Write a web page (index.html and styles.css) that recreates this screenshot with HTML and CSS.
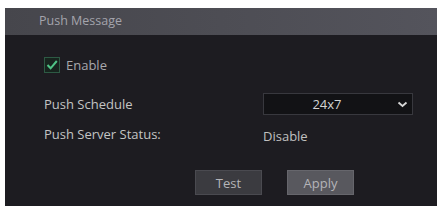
FILE: index.html
```
<html>
<head>
	<title>Push Message</title>
	<link rel="stylesheet" href="styles.css">
</head>
<body>
	<div class="panel">
		<div class="title">Push Message</div>
		<div class="content">
			<label class="check">
				<span class="box">
					<svg width="14" height="14" viewBox="0 0 14 14"><path d="M2.5 7 L5.6 10.3 L11.8 3" fill="none" stroke="#4fc486" stroke-width="2"/></svg>
				</span>
				Enable
			</label>
			<div class="row schedule">
				<span class="label">Push Schedule</span>
				<div class="select">
					<span>24x7</span>
					<svg class="chev" width="11" height="7" viewBox="0 0 11 7"><path d="M1.5 1.5 L5.5 5 L9.5 1.5" fill="none" stroke="#d8d8d8" stroke-width="1.8"/></svg>
				</div>
			</div>
			<div class="row status">
				<span class="label">Push Server Status:</span>
				<span class="value">Disable</span>
			</div>
			<div class="buttons">
				<button class="btn test">Test</button>
				<button class="btn apply">Apply</button>
			</div>
		</div>
	</div>
</body>
</html>
```

FILE: styles.css
```
* {
	box-sizing: border-box;
}

body {
	margin: 0;
	background: #ffffff;
	font-family: "Open Sans", "Liberation Sans", sans-serif;
	font-size: 13px;
	color: #c4c4c4;
}

.panel {
	margin: 8px 0 0 5px;
	height: 200px;
	background: #1d1c21;
}

.title {
	height: 27px;
	padding: 4px 0 0 34px;
	background: linear-gradient(to right, #46464c, #54545c);
	color: #a4a4ac;
	font-size: 12.5px;
}

.content {
	padding: 22px 0 0 39px;
}

.check {
	display: flex;
	align-items: center;
	gap: 6px;
	height: 16px;
	color: #a8a8ac;
}

.box {
	width: 16px;
	height: 16px;
	border: 1px solid #2d5a44;
	background: #17241e;
	display: flex;
	align-items: center;
	justify-content: center;
}

.row {
	display: flex;
	align-items: center;
}

.label {
	width: 219px;
	color: #c4c4c4;
}

.schedule {
	margin-top: 20px;
	height: 22px;
}

.select {
	width: 150px;
	height: 22px;
	padding-right: 22px;
	border: 1px solid #38383e;
	background: #121215;
	display: flex;
	align-items: center;
	justify-content: center;
	position: relative;
	color: #d4d4d4;
}

.chev {
	position: absolute;
	right: 4px;
	top: 7px;
}

.status {
	margin-top: 8px;
	height: 22px;
}

.status .value {
	padding-top: 4px;
	color: #c0c0c0;
}

.buttons {
	display: flex;
	gap: 25px;
	margin: 25px 0 0 151px;
}

.btn {
	width: 67px;
	height: 25px;
	border: 1px solid #4a4a50;
	font-family: inherit;
	font-size: 13px;
	color: #b4b4b8;
	padding: 0;
}

.test {
	background: #3b3b40;
}

.apply {
	background: #58585e;
	border-color: #66666c;
}
```
